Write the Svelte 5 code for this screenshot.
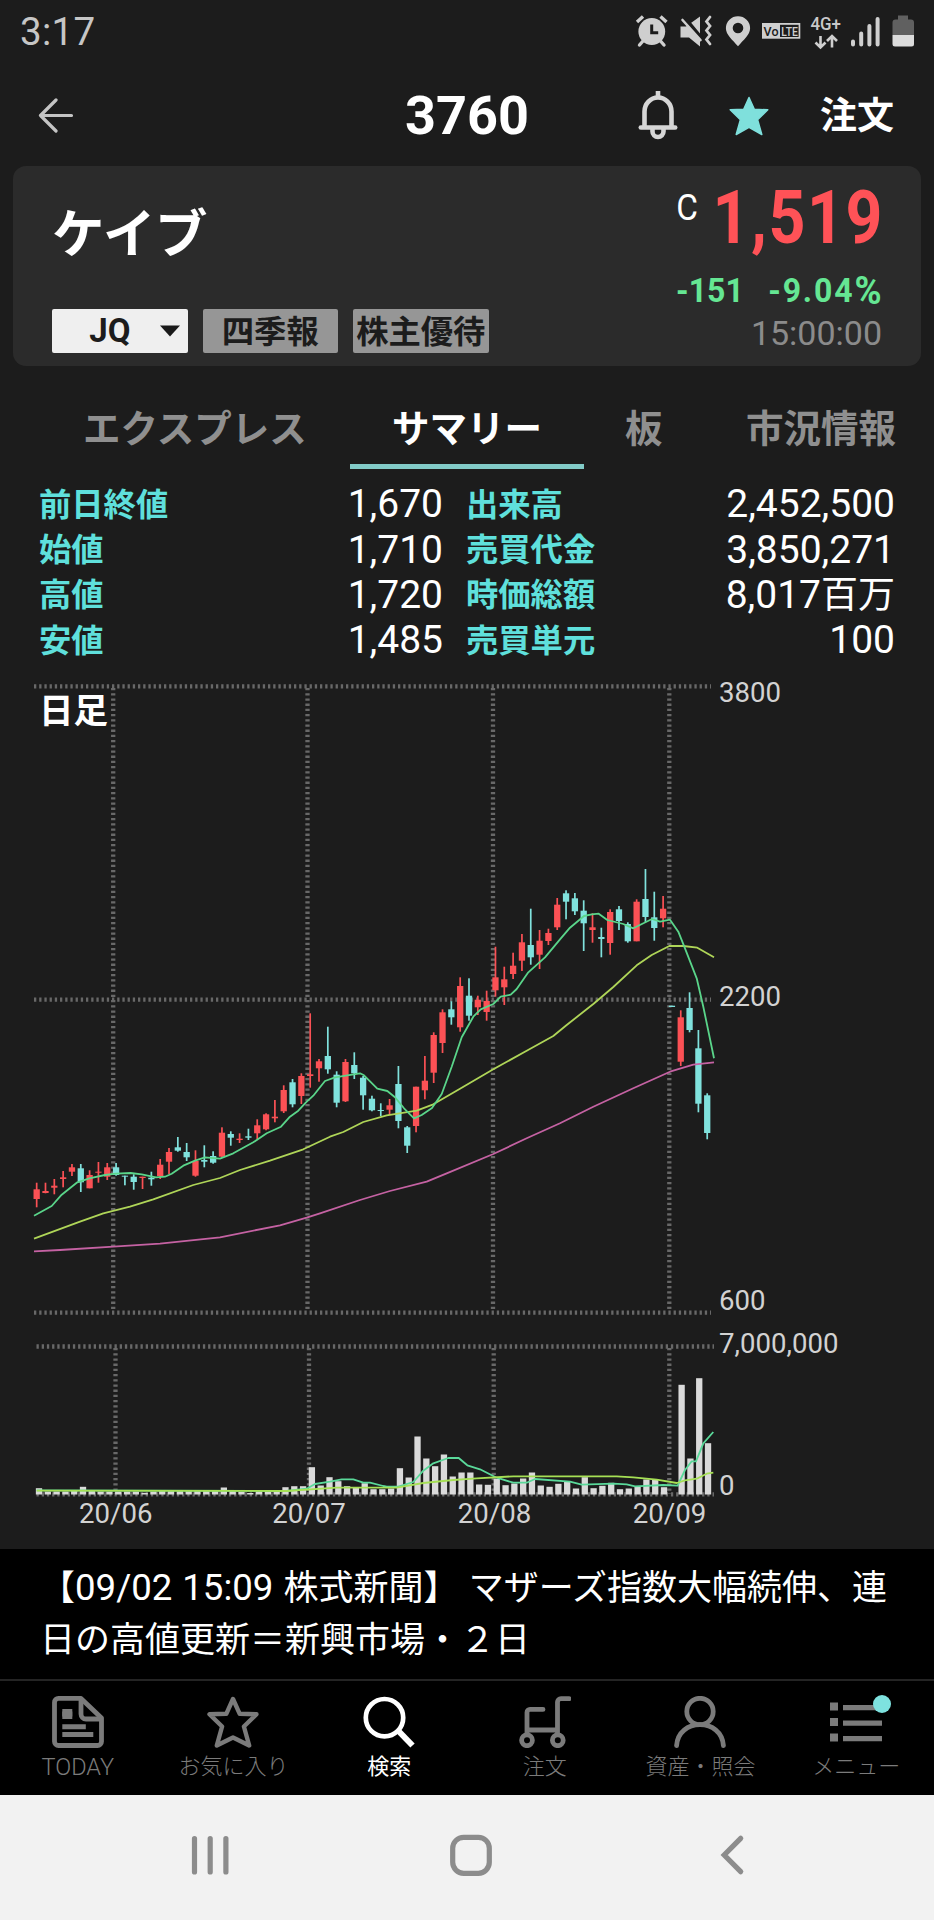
<script>
  const quotes = [
    ['前日終値', '1,670', '出来高', '2,452,500', ''],
    ['始値', '1,710', '売買代金', '3,850,271', ''],
    ['高値', '1,720', '時価総額', '8,017', '百万'],
    ['安値', '1,485', '売買単元', '100', '']
  ];

  // u = up day, d = down day; then high, body top, body bottom, low
  const candles = [
    ['u', 1182.7, 1189.3, 1199, 1207.3], ['u', 1182.7, 1191, 1193, 1193.3], ['u', 1179, 1185.7, 1187.7, 1194.3],
    ['u', 1171, 1177.3, 1179, 1187.3], ['u', 1164, 1167.3, 1171.7, 1176], ['d', 1164, 1168.3, 1182.3, 1192],
    ['u', 1170.3, 1175, 1188.3, 1188.3], ['u', 1162, 1171.7, 1172.7, 1182.7], ['u', 1163, 1167.3, 1176.7, 1180],
    ['d', 1163, 1167.3, 1175, 1175.7], ['d', 1175.7, 1175.7, 1176.7, 1185.3], ['d', 1174.3, 1176.7, 1182, 1189.7],
    ['u', 1176.7, 1176.7, 1178, 1189], ['d', 1171.7, 1177.7, 1179.3, 1185.7], ['u', 1159, 1164.7, 1176, 1179],
    ['u', 1148, 1152, 1161.7, 1174], ['d', 1137, 1147.3, 1150.7, 1151.7], ['d', 1143, 1152, 1157.3, 1161],
    ['u', 1150.3, 1161, 1175.7, 1176.7], ['d', 1145.3, 1160, 1161.7, 1167.3], ['d', 1151.3, 1156, 1162.7, 1163.7],
    ['u', 1127.3, 1132.7, 1156.7, 1157.3], ['d', 1131.3, 1134, 1137.7, 1145.7], ['u', 1133.3, 1138.7, 1140, 1143],
    ['d', 1128.7, 1136.3, 1137.7, 1140], ['u', 1119.3, 1125.3, 1133.3, 1139], ['u', 1113.3, 1114.3, 1129.3, 1130.3],
    ['u', 1100, 1116.7, 1118.3, 1122.3], ['u', 1085.3, 1090, 1111.3, 1113], ['d', 1079, 1082.3, 1104.3, 1107.3],
    ['u', 1073.3, 1076, 1096, 1104], ['u', 1013.3, 1074.3, 1076, 1087.7], ['u', 1059, 1061.3, 1068.3, 1081.7],
    ['d', 1026.7, 1056, 1069.3, 1073.7], ['d', 1071.3, 1074.7, 1102.7, 1107.3], ['u', 1059, 1062, 1101.3, 1102],
    ['d', 1052.3, 1065, 1073.3, 1079], ['d', 1076, 1077.7, 1095.3, 1109.7], ['d', 1095.7, 1098.7, 1110.3, 1111.3],
    ['d', 1103.3, 1110, 1111, 1116], ['u', 1099, 1105.3, 1109.7, 1115], ['d', 1066, 1084, 1121, 1128.3],
    ['d', 1126, 1127.3, 1145.7, 1153], ['u', 1086.7, 1086.7, 1126, 1132.3], ['u', 1056, 1080.7, 1090.3, 1099.3],
    ['u', 1032.3, 1035, 1072.7, 1083], ['u', 1009.3, 1012.3, 1043, 1053], ['d', 1001.3, 1009.3, 1017.3, 1024.7],
    ['u', 977.3, 986, 1027.3, 1031.7], ['d', 978.3, 995.7, 1015.7, 1020.7], ['u', 995.7, 999.7, 1007.3, 1015],
    ['u', 990.7, 1001, 1012, 1020.7], ['u', 946.7, 977.3, 990.3, 996.7], ['u', 966.7, 979.3, 987.3, 1005],
    ['u', 952.7, 965.7, 974, 979], ['u', 934, 942.3, 960.7, 971], ['d', 908.7, 945, 957.3, 964.7],
    ['u', 930, 940.7, 954.7, 969], ['u', 928.7, 933, 941, 945], ['u', 898, 904.7, 927.3, 930],
    ['d', 890.3, 893.3, 901.7, 919.3], ['d', 893, 898.3, 911.3, 915], ['d', 900.3, 910.7, 923.3, 951],
    ['u', 913.3, 927.3, 930, 942.7], ['d', 927.7, 937, 939, 957.3], ['u', 909.3, 912, 943, 954.7],
    ['d', 906, 909.3, 921, 930], ['d', 922.3, 924, 941.3, 942.7], ['u', 899.3, 901.7, 941.3, 941.3],
    ['d', 869, 899, 917, 922.3], ['d', 891.7, 917.3, 928, 940.7], ['u', 896, 908.7, 918.3, 927.3],
    ['d', 1005.7, 1005.7, 1007, 1007], ['u', 1010.3, 1017.3, 1061.7, 1066], ['d', 992.3, 1008, 1030, 1032.3],
    ['d', 1030, 1048.3, 1103.7, 1112.3], ['d', 1093.3, 1095.3, 1133, 1139.3]
  ];

  const volumes = [
    6.3, 3, 3, 3, 3.5, 7.7, 3.5, 3, 3, 3, 3, 3, 1.7, 3, 4, 3.5, 3.5, 3.5, 3.5, 3.5, 4, 7, 4, 2.5, 1.5, 3.5, 3, 3,
    7.3, 8.3, 8.3, 27.3, 9, 17.3, 13.3, 8.3, 7.3, 11.3, 5.3, 5.3, 6, 26.3, 17, 58, 36, 28.3, 40, 18, 22, 22, 10,
    9.7, 15.7, 9.3, 11, 16, 22, 9, 7.7, 10.7, 12.7, 6, 17.3, 6.3, 8.7, 11.7, 5.3, 6, 8.3, 15, 15, 7.3, 0, 109.7,
    36, 116.3, 51.3
  ];

  const maShort =
    '34,1215.7 51.7,1206 61.7,1194.7 76.7,1182.7 89.3,1178.3 105,1175 116,1173.7 130.7,1173 141.7,1174.3 156,1177.3 165,1176.7 171.7,1173.7 183.3,1165.7 195,1160.7 205,1157.3 220,1158.7 233.3,1153.3 253.3,1142.3 266.7,1133.3 281,1126.7 289.3,1117.3 298.3,1110.7 306,1102.3 313.3,1095.7 320,1087.3 325,1081 335,1077.3 347.3,1075.3 360,1073.3 364,1075.3 377.3,1088.7 387.3,1091 395,1097.3 404,1108.3 414,1118.3 421.7,1115 432,1108 441.7,1094 451.7,1066.7 461.7,1037.3 473.3,1016.7 480.7,1009.3 493.3,1004 500.7,996.7 510.7,994.7 516.7,989 528.3,972.3 545,957.3 560,939.3 570,927.7 584,916 591.7,914.3 598.7,913.7 607.3,920 623.3,924 633.3,928.3 652,919 660,921.7 670,919.7 678.3,931.7 684.3,946.7 696.7,978.3 703.3,1006.7 714,1058.3';
  const maMid =
    '34,1238.7 80,1221.7 103.3,1213.3 130,1206.7 153.3,1199.3 193.3,1185 220,1178 240,1170 270,1160.7 303.3,1149.3 330,1136.7 343.3,1132 363.3,1122 386.7,1115.3 416.7,1110.7 433.3,1104.3 460,1088.7 493.3,1069.3 526.7,1050.7 553.3,1036 566.7,1025 593.3,1004 613.3,987 636.7,965.3 651.7,955 669.3,946 683.3,946 697.3,947.7 714,957.3';
  const maLong =
    '34,1251.3 60,1250 113.3,1246.7 160,1243.7 220,1237.3 280,1225.3 306.7,1217.7 320,1213.3 360,1200 390,1191 426.7,1181.7 446.7,1173.3 493.3,1154 526.7,1138.3 560,1123.3 593.3,1106.7 633.3,1088.3 670,1071.7 693.3,1064.7 714,1062.3';
  const volShort =
    '36.7,1490.3 286.7,1491 306.7,1488.7 315,1484 330,1481.7 341.7,1479.3 353.3,1479.3 363.3,1482.7 370,1482.7 383.3,1486 386.7,1486.7 398.3,1486.7 413.3,1482 423.3,1470.7 433.3,1463.3 448.3,1458 458.7,1458 467.3,1465.3 480,1469.3 496.7,1477.7 513.3,1482.7 526.7,1482.7 535,1479 570,1481.7 581.7,1484.7 613.3,1483.7 626.7,1484.3 635,1486.3 663.3,1485 677.7,1485.7 685,1470 691.7,1461.3 696,1461.3 703.3,1443.3 713.3,1432';
  const volMid =
    '36.7,1490.7 286.7,1491 336.7,1487.7 396.7,1487.7 423.3,1483 453.3,1480 476.7,1478.3 513.3,1476.3 616.7,1476.3 633.3,1477.3 656.7,1479.7 676.7,1483 685,1480.3 696.7,1478.7 706.7,1473.7 713.3,1472.7';
</script>

<div class="screen">
  <header class="status">
    <span class="clock">3:17</span>
    <svg class="sys" viewBox="630 10 290 42" width="290" height="42">
      <g fill="#cfcfcf" stroke="#cfcfcf" stroke-linecap="round">
        <circle cx="651.8" cy="31.5" r="13.4" stroke="none" />
        <path d="M637 22l6-5.5M666.500 22l-6-5.500" stroke-width="3.400" stroke-linecap="butt" />
        <path d="M643 41l-3.500 4M660.500 41l3.500 4" stroke-width="3.400" />
        <path d="M651.700 24.500v8.300h6.500" stroke="#1c1c1c" fill="none" stroke-width="3" stroke-linecap="butt" />
        <path d="M680.500 26.500h5.500l14 -10v30l-11-9h-8.500z" stroke="none" />
        <path d="M683 16l19 23" stroke="#1c1c1c" stroke-width="4" />
        <path d="M682.500 20l18 20" stroke-width="2.600" />
        <path d="M710 17l-3.500 4.500 3.500 4.500-3.500 4.500 3.500 4.500-3.500 4.500 3.500 4.500" fill="none" stroke-width="2.800" />
        <path d="M738 16.300a12 12 0 0 1 12.100 12c0 6.500-6.500 11.500-12.100 18-5.600-6.500-12.100-11.500-12.100-18a12 12 0 0 1 12.100-12zm0 6.400a5.300 5.300 0 1 0 0 10.600a5.300 5.300 0 0 0 0-10.600z" fill-rule="evenodd" stroke="none" />
        <rect x="762" y="23" width="38.300" height="15.700" stroke="none" />
      </g>
      <rect x="780" y="24.800" width="18.600" height="12.200" fill="#1c1c1c" />
      <text x="763.500" y="35.700" font-size="12.500" font-weight="500" fill="#1c1c1c" textLength="15">Vo</text>
      <text x="781.300" y="35.500" font-size="12.800" font-weight="500" fill="#cfcfcf" textLength="16.500" lengthAdjust="spacingAndGlyphs">LTE</text>
      <text x="810.500" y="30" font-size="17.500" font-weight="500" fill="#c9c9c9" textLength="30.500" lengthAdjust="spacingAndGlyphs">4G+</text>
      <path d="M820.500 36v11M815.500 42.500l5 5 5-5M832 47.500v-11M827 41l5-5 5 5" fill="none" stroke="#cfcfcf" stroke-width="2.600" />
      <path d="M853 41.500v3M861.200 33.500v11M869.400 26v18.500M877.600 19v25.500" fill="none" stroke="#cfcfcf" stroke-width="4" stroke-linecap="round" />
      <path d="M898 15.500h10v4h3a3 3 0 0 1 3 3v12.500h-21.500v-12.500a3 3 0 0 1 3-3h2.500z" fill="#606060" />
      <path d="M892.500 35h21.500v9a2.500 2.500 0 0 1-2.500 2.500h-16.500a2.500 2.500 0 0 1-2.500-2.500z" fill="#dcdcdc" />
    </svg>
  </header>

  <div class="titlebar">
    <svg class="back" width="36" height="36" viewBox="0 0 36 36" fill="none" stroke="#c4c4c4" stroke-width="3.200" stroke-linecap="round" stroke-linejoin="round">
      <path d="M18 2L2.500 17.500 18 33M2.500 17.500H33.500" />
    </svg>
    <h1>3760</h1>
    <div class="actions">
      <svg width="40" height="50" viewBox="0 0 40 50" fill="none" stroke="#d6d6d6" stroke-width="4.600">
        <path d="M20 0v6" /><path d="M6.500 37V20.500a13.500 14 0 0 1 27 0V37" />
        <path d="M2.800 36.500h34.400" stroke-linecap="round" /><path d="M14.500 37v3.500a5.500 5.500 0 0 0 11 0V37" />
      </svg>
      <svg class="fav" width="40" height="40" viewBox="0 0 40 40">
        <path d="M20 1.500l5.300 11.800 13.500.5-10.200 9.900 4.200 14.800L20 31.300 7.200 38.500l4.200-14.800L1.200 13.800l13.500-.5z" fill="#7fe0dc" stroke="#7fe0dc" stroke-width="1.500" stroke-linejoin="round" />
      </svg>
      <span class="order">注文</span>
    </div>
  </div>

  <section class="card">
    <div class="left">
      <h2>ケイブ</h2>
      <div class="chips">
        <span class="chip market">JQ<svg width="22" height="12" viewBox="0 0 22 12"><path d="M1 0.500h20L11 11.500z" fill="#1a1a1a" /></svg></span>
        <span class="chip">四季報</span>
        <span class="chip">株主優待</span>
      </div>
    </div>
    <div class="right">
      <div class="price"><span class="mark">C</span><span class="last">1,519</span></div>
      <div class="change"><span>-151</span><span class="pct">-9.04<i>%</i></span></div>
      <div class="time">15:00:00</div>
    </div>
  </section>

  <nav class="tabs">
    <span class="t1">エクスプレス</span>
    <span class="t2 on">サマリー</span>
    <span class="t3">板</span>
    <span class="t4">市況情報</span>
  </nav>

  <section class="quotes">
    {#each quotes as [a, av, b, bv, unit]}
      <b>{a}</b><span>{av}</span><b class="second">{b}</b><span>{bv}{#if unit}<i>{unit}</i>{/if}</span>
    {/each}
  </section>

  <svg class="chart" viewBox="0 667 934 882" width="934" height="882">
    <g stroke="#686868" stroke-width="4.300" stroke-dasharray="2.300 2.900">
      <path d="M34 686.300H711M34 999.700H711M34 1312.700H711" />
      <path d="M113.200 688V1312M307.500 688V1312M493 688V1312M669.300 688V1312" />
      <path d="M36.500 1346.500H714M36.500 1494.300H714" />
      <path d="M115.500 1348V1494M309 1348V1494M493.700 1348V1494M669.300 1348V1494" />
    </g>
    {#each candles as [dir, high, top, bottom, low], i}
      <g class={dir}>
        <rect x={36.67 + i * 8.823 - 0.85} y={high} width="1.700" height={low - high} />
        <rect x={36.67 + i * 8.823 - 3.15} y={top} width="6.300" height={bottom - top} />
      </g>
    {/each}
    {#each volumes as v, i}
      <rect x={39 + i * 8.803 - 3.15} y={1494.5 - v} width="6.300" height={v} fill="#dadada" />
    {/each}
    <g fill="none" stroke-width="1.800" stroke-linejoin="round">
      <polyline points={maLong} stroke="#c562a3" />
      <polyline points={maMid} stroke="#afd558" />
      <polyline points={maShort} stroke="#5ad58a" />
      <polyline points={volShort} stroke="#5ad99a" />
      <polyline points={volMid} stroke="#a6e055" />
    </g>
    <g class="axis">
      <text x="719" y="701.600">3800</text>
      <text x="719" y="1006.300">2200</text>
      <text x="719" y="1310">600</text>
      <text x="719" y="1352.700">7,000,000</text>
      <text x="719" y="1495.300">0</text>
      <g text-anchor="middle">
        <text x="115.700" y="1522.700">20/06</text>
        <text x="309" y="1522.700">20/07</text>
        <text x="494.500" y="1522.700">20/08</text>
        <text x="669.500" y="1522.700">20/09</text>
      </g>
    </g>
    <text class="period" x="39" y="723">日足</text>
  </svg>

  <section class="news">【<span class="stamp">09/02 15:09</span> 株式新聞】 マザーズ指数大幅続伸、連<br />日の高値更新＝新興市場・２日</section>

  <nav class="menu">
    <div class="item">
      <svg width="52" height="52" viewBox="0 0 52 52" fill="none" stroke="currentColor" stroke-width="4.800" stroke-linejoin="round">
        <path d="M6.500 2.400H29L49.500 22V45.500a4 4 0 0 1-4 4h-39a4 4 0 0 1-4-4V6.400a4 4 0 0 1 4-4z" />
        <path d="M29 3V18a5 5 0 0 0 5 5H49" />
        <path d="M10.300 18h10M10.300 30.800h23.500M10.300 38.500h31" stroke-width="5" /><path d="M10.300 18h10" stroke-width="10" />
      </svg>
      <span class="latin">TODAY</span>
    </div>
    <div class="item">
      <svg width="52" height="52" viewBox="0 0 52 52" fill="none" stroke="currentColor" stroke-width="4.400" stroke-linejoin="round">
        <path d="M26 3l6.700 14.800 16.800.4-12.600 12.300 5.300 19L26 41.500 9.800 49.500l5.300-19L2.500 18.200l16.800-.4z" />
      </svg>
      <span>お気に入り</span>
    </div>
    <div class="item active">
      <svg width="52" height="52" viewBox="0 0 52 52" fill="none" stroke="currentColor">
        <circle cx="21.500" cy="21.700" r="18.700" stroke-width="4.700" /><path d="M35 34.500L49.500 49.500" stroke-width="6" />
      </svg>
      <span>検索</span>
    </div>
    <div class="item">
      <svg width="52" height="52" viewBox="0 0 52 52" fill="none" stroke="currentColor" stroke-width="4.800" stroke-linecap="round" stroke-linejoin="round">
        <path d="M24 13.400H11a3 3 0 0 0-3 3V37M8 34H38M50 2.600H42a3.500 3.500 0 0 0-3.500 3.500V37" />
        <circle cx="8" cy="44.300" r="5.400" /><circle cx="38.800" cy="44.300" r="5.400" />
      </svg>
      <span>注文</span>
    </div>
    <div class="item">
      <svg width="52" height="52" viewBox="0 0 52 52" fill="none" stroke="currentColor" stroke-width="4.800" stroke-linecap="round">
        <circle cx="26" cy="15.500" r="13.200" /><path d="M2.600 49.500C3.500 36 14 28.700 26 28.700S48.500 36 49.400 49.500" />
      </svg>
      <span>資産・照会</span>
    </div>
    <div class="item">
      <svg width="52" height="52" viewBox="0 0 52 52" fill="none" stroke="currentColor">
        <path d="M0 10.500h8M0 26h8M0 41.500h8" stroke-width="8" /><path d="M13 11.700h39M13 27.200h39M13 42.700h39" stroke-width="5.300" />
      </svg>
      <i class="badge"></i>
      <span>メニュー</span>
    </div>
  </nav>

  <footer class="keys">
    <svg width="934" height="50" viewBox="0 1830 934 50" fill="none" stroke="#8c8c8c" stroke-width="5.200" stroke-linecap="round">
      <path d="M194.500 1838.500V1872M210.200 1838.500V1872M225.900 1838.500V1872" />
      <rect x="452.700" y="1837.300" width="36.600" height="36" rx="11" />
      <path d="M740.700 1838.300L724.200 1855 740.700 1871.700" stroke-linecap="round" />
    </svg>
  </footer>
</div>

<style>
  :global(body) { background: #1c1c1c; }
  .screen {
    width: 934px; height: 1920px; display: flex; flex-direction: column; overflow: hidden;
    background: #1c1c1c; color: #fff;
    font-family: Roboto, "Noto Sans CJK JP", sans-serif;
  }
  .screen > * { flex: none; box-sizing: border-box; }
  svg { display: block; }
  svg text { font-family: Roboto, "Noto Sans CJK JP", sans-serif; }
  h1, h2 { margin: 0; }

  .status { height: 64px; display: flex; justify-content: space-between; padding: 10px 14px 0 20px; }
  .clock { font-size: 38.500px; line-height: 44px; letter-spacing: 0.300px; color: #c6c6c6; }

  .titlebar { height: 102px; display: grid; grid-template-columns: 1fr auto 1fr; align-items: center; padding-top: 1px; }
  .back { margin-left: 38px; }
  h1 { font-size: 54px; line-height: 60px; font-weight: 700; }
  .actions { display: flex; align-items: center; justify-content: flex-end; padding-right: 40px; }
  .fav { margin: 0 51px; }
  .order { font-size: 37px; line-height: 50px; padding-top: 3px; font-weight: 700; }

  .card {
    height: 200px; margin: 0 13px; padding: 0 39px; border-radius: 13px; background: #2b2b2b;
    display: flex; justify-content: space-between;
  }
  .left { display: flex; flex-direction: column; justify-content: space-between; padding: 37px 0 13px; }
  h2 { font-size: 52.500px; line-height: 64px; letter-spacing: -0.500px; font-weight: 700; }
  .chips { display: flex; gap: 15px; }
  .chip {
    width: 135.500px; height: 44px; border-radius: 2px; background: #969696; color: #1c1c1c;
    font-size: 32.300px; line-height: 46px; font-weight: 700; text-align: center; white-space: nowrap;
  }
  .market { display: flex; align-items: center; justify-content: flex-end; gap: 28px; background: #efefef; box-sizing: border-box; padding-right: 7px; font-size: 33px; }
  .right { display: flex; flex-direction: column; align-items: flex-end; padding: 11px 0 0 0; }
  .price { display: flex; align-items: flex-start; height: 82px; }
  .mark { font-size: 37px; line-height: 61px; transform: scaleX(0.9); margin-right: -12px; }
  .last { font-size: 74px; line-height: 82px; font-weight: 700; color: #ff5257; letter-spacing: 1.800px; margin-right: -2px; transform: scaleX(0.87); transform-origin: right; }
  .change { display: flex; gap: 26px; font-size: 34px; line-height: 44px; margin-top: 9px; font-weight: 700; color: #65e693; transform: scaleX(0.94); transform-origin: right; }
  .pct { letter-spacing: 2px; margin-right: -2px; }
  .pct i { font-style: normal; font-size: 39px; line-height: 36px; vertical-align: -2px; }
  .time { font-size: 34px; line-height: 42px; color: #8b8b8b; }

  .tabs { height: 103px; display: flex; font-size: 37.500px; line-height: 50px; font-weight: 700; color: #8f8f8f; padding-top: 38px; white-space: nowrap; }
  .tabs span { height: 64.500px; box-sizing: border-box; }
  .t1 { width: 350px; padding-left: 83px; }
  .t2 { width: 234px; padding-left: 42px; }
  .t3 { width: 120px; padding-left: 41px; }
  .t4 { width: 230px; padding-left: 42px; }
  .tabs .on { color: #fff; border-bottom: 5.500px solid #82cbc7; }

  .quotes {
    height: 198px; padding: 13px 39px 0; display: grid; grid-template-columns: 190px 214px 200px 1fr;
    grid-auto-rows: 45.400px; align-items: center;
  }
  .quotes b { font-size: 32.300px; line-height: 43px; padding-top: 1px; color: #5fe0dc; }
  .quotes .second { padding-left: 23px; }
  .quotes span { font-size: 39px; line-height: 45px; text-align: right; white-space: nowrap; }
  .quotes i { font-style: normal; font-size: 37px; line-height: 40px; }

  .u { fill: #fb5155; }
  .d { fill: #80e2dd; }
  .axis { font-size: 27.600px; fill: #d2d2d2; }
  .period { font-size: 34.500px; font-weight: 700; fill: #fff; }

  .news { height: 132px; padding: 14px 40px 0; background: #000; font-size: 35px; line-height: 52px; word-spacing: 1.500px; white-space: nowrap; border-bottom: 2px solid #242424; }
  .stamp { font-size: 36.600px; line-height: 40px; word-spacing: 0.900px; }

  .menu { height: 114px; display: grid; grid-template-columns: repeat(6, 1fr); background: #000; color: #7b7b7b; }
  .item { position: relative; display: flex; flex-direction: column; align-items: center; padding-top: 14.500px; font-size: 22px; line-height: 28px; font-weight: 300; }
  .item span { margin-top: 5px; white-space: nowrap; }
  .item .latin { font-size: 23.500px; }
  .active { color: #fff; font-weight: 400; }
  .badge { position: absolute; left: 95px; top: 14px; width: 18px; height: 18px; border-radius: 50%; background: #7ee2df; }

  .keys { height: 125px; background: #f2f2f2; padding-top: 35px; }
</style>
